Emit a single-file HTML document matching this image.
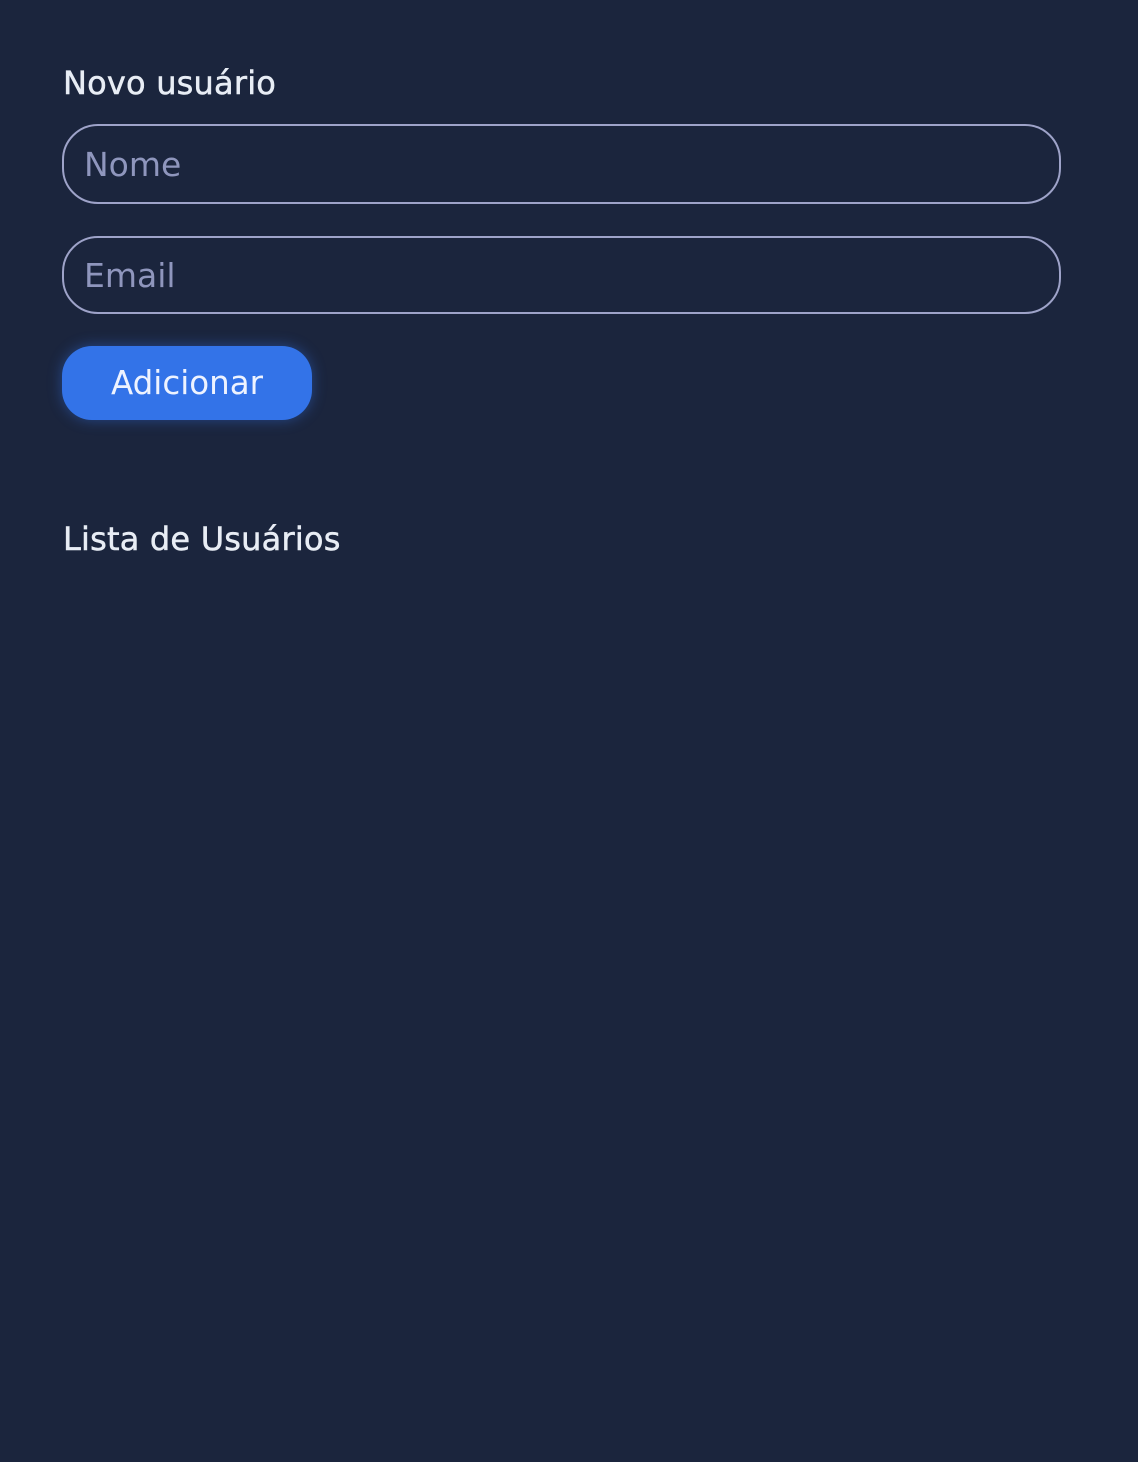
<!DOCTYPE html>
<html><head><meta charset="utf-8"><style>
html,body{margin:0;width:1138px;height:1462px;background:#1b253d;font-family:"DejaVu Sans","Liberation Sans",sans-serif;}
.h{position:absolute;left:63px;color:#e8edf5;font-size:32px;font-weight:400;letter-spacing:0.2px;-webkit-text-stroke:0.5px #e8edf5;}
.in{position:absolute;left:62px;border:2px solid #9ea3c9;border-radius:36px;box-sizing:border-box;color:#8f96bd;font-size:33px;padding-left:20px;display:flex;align-items:center;}
.btn{position:absolute;left:62px;top:346px;width:250px;height:74px;border-radius:30px;background:#3373e8;color:#eef3ff;font-size:32.5px;display:flex;align-items:center;justify-content:center;box-shadow:0 0 14px rgba(51,115,232,0.45);}
</style></head><body>
<div class="h" style="top:64px">Novo usuário</div>
<div class="in" style="top:124px;height:80px;width:999px">Nome</div>
<div class="in" style="top:236px;height:78px;width:999px">Email</div>
<div class="btn">Adicionar</div>
<div class="h" style="top:520px">Lista de Usuários</div>
</body></html>
